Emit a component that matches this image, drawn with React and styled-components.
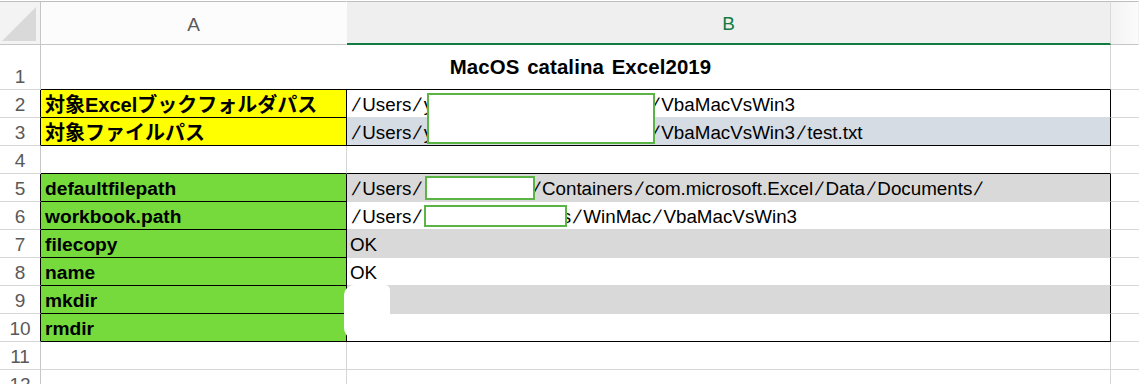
import React from 'react';
import styled, { createGlobalStyle } from 'styled-components';

const GRID = '#d6d6d6';
const HEAD_LINE = '#c6c6c6';
const EDGE = '#000';
const YELLOW = '#ffff00';
const GREEN = '#76d93c';
const BLUEGRAY = '#d6dce4';
const GRAY = '#d9d9d9';
const MARK = '#5bb446';

const GlobalStyle = createGlobalStyle`
    html, body {
        margin: 0;
        padding: 0;
        background: #fff;
    }
    body {
        font-family: "Liberation Sans", "Noto Sans CJK JP", sans-serif;
        overflow: hidden;
    }
`;

const Sheet = styled.div`
    position: relative;
    width: 1139px;
    height: 384px;
    padding-top: 1px;
    box-sizing: border-box;
    overflow: hidden;
    background: #fff;
`;

const Grid = styled.div`
    display: grid;
    grid-template-columns: 41px 306px 764px 1fr;
    grid-template-rows: 44px 45px repeat(11, 28px);
`;

const Corner = styled.div`
    box-sizing: border-box;
    border-top: 1px solid #bdbdbd;
    border-right: 1px solid ${HEAD_LINE};
    border-bottom: 1px solid ${HEAD_LINE};
    background: #f3f3f3;
    display: flex;

    svg {
        display: block;
    }
`;

const ColHead = styled.div`
    box-sizing: border-box;
    border-top: 1px solid #bdbdbd;
    border-bottom: ${props => props.$active ? '2px solid #107c41' : `1px solid ${HEAD_LINE}`};
    border-right: 1px solid ${props => props.$line || 'transparent'};
    background: ${props => props.$bg || '#fcfcfc'};
    color: ${props => props.$active ? '#107c41' : '#5a5a5a'};
    display: flex;
    align-items: center;
    justify-content: center;
    padding-top: 3px;
    font-size: 19px;
`;

const RowHead = styled.div`
    box-sizing: border-box;
    border-right: 1px solid ${props => props.$edge ? EDGE : HEAD_LINE};
    border-bottom: 1px solid ${GRID};
    display: flex;
    align-items: flex-end;
    justify-content: center;
    padding-bottom: 1px;
    color: #595959;
    font-size: 19px;
    line-height: 22px;
`;

const Cell = styled.div`
    box-sizing: border-box;
    display: flex;
    align-items: flex-end;
    padding: 0 0 1px ${props => props.$pad || 3}px;
    background: ${props => props.$fill || '#fff'};
    border-right: 1px solid ${props => props.$right || GRID};
    border-bottom: 1px solid ${props => props.$bottom || GRID};
    color: #000;
    font-size: ${props => props.$size || 18.8}px;
    font-weight: ${props => props.$bold ? 700 : 400};
    line-height: 22px;
    white-space: nowrap;
    overflow: hidden;
`;

const Title = styled.div`
    grid-column: span 2;
    box-sizing: border-box;
    display: flex;
    align-items: center;
    justify-content: center;
    padding-left: 10px;
    border-right: 1px solid ${GRID};
    border-bottom: 1px solid ${EDGE};
    font-size: 20.4px;
    font-weight: 700;
    letter-spacing: 0.1px;
    word-spacing: 2px;
`;

const Side = styled.div`
    box-sizing: border-box;
    border-bottom: 1px solid ${GRID};
    background: #fff;
`;

const Text = styled.span`
    white-space: pre;
`;

/* the sheet font draws a wide, flat solidus */
const Slash = styled.span`
    display: inline-block;
    width: 12.3px;
    text-align: center;
    transform: skewX(-16deg);
`;

const Hidden = styled.span`
    display: inline-block;
    width: ${props => props.$w}px;
`;

const Redact = styled.div`
    position: absolute;
    box-sizing: border-box;
    border: 2px solid ${MARK};
    background: #fff;
`;

const Smudge = styled.div`
    position: absolute;
    left: 344px;
    top: 285px;
    width: 46px;
    height: 56px;
    background: #fff;
    border-radius: 10px 5px 6px 14px;
`;

const PathText = ({ text }) => (
    text.split('/').map((part, i) => (
        <React.Fragment key={i}>
            {i > 0 && <Slash>/</Slash>}
            {part}
        </React.Fragment>
    ))
);

const rows = [
    {
        n: 2, edge: true,
        label: '対象Excelブックフォルダパス', labelFill: YELLOW, labelSize: 20,
        pre: '/Users/y', gap: 216, post: '/VbaMacVsWin3',
        fill: '#fff', bottom: BLUEGRAY,
    },
    {
        n: 3, edge: true,
        label: '対象ファイルパス', labelFill: YELLOW, labelSize: 20,
        pre: '/Users/y', gap: 216, post: '/VbaMacVsWin3/test.txt',
        fill: BLUEGRAY, bottom: EDGE,
    },
    { n: 4, blank: true },
    {
        n: 5, edge: true, label: 'defaultfilepath', labelFill: GREEN,
        pre: '/Users/', gap: 106, post: '/Containers/com.microsoft.Excel/Data/Documents/',
        fill: GRAY, bottom: GRAY,
    },
    {
        n: 6, edge: true, label: 'workbook.path', labelFill: GREEN,
        pre: '/Users/', gap: 138, post: 's/WinMac/VbaMacVsWin3',
        fill: '#fff', bottom: GRAY,
    },
    { n: 7, edge: true, label: 'filecopy', labelFill: GREEN, pre: 'OK', fill: GRAY, bottom: GRAY },
    { n: 8, edge: true, label: 'name', labelFill: GREEN, pre: 'OK', fill: '#fff', bottom: GRAY },
    { n: 9, edge: true, label: 'mkdir', labelFill: GREEN, pre: '', fill: GRAY, bottom: GRAY },
    { n: 10, edge: true, label: 'rmdir', labelFill: GREEN, pre: '', fill: '#fff', bottom: EDGE },
    { n: 11, blank: true, plain: true },
    { n: 12, blank: true, plain: true },
];

const CornerMark = () => (
    <svg width="40" height="43" viewBox="0 0 40 43">
        <polygon points="36,5 36,39 2,39" fill="#d9d9d9" />
    </svg>
);

const SheetRow = ({ row }) => {
    if (row.blank) {
        return (
            <>
                <RowHead>{row.n}</RowHead>
                <Cell $bottom={row.plain ? GRID : EDGE} />
                <Cell $bottom={row.plain ? GRID : EDGE} />
                <Side />
            </>
        );
    }
    return (
        <>
            <RowHead $edge={row.edge}>{row.n}</RowHead>
            <Cell
                $pad={4}
                $bold
                $size={row.labelSize || 19.2}
                $fill={row.labelFill}
                $right={EDGE}
                $bottom={EDGE}
            >
                <Text>{row.label}</Text>
            </Cell>
            <Cell $fill={row.fill} $right={EDGE} $bottom={row.bottom}>
                <Text>
                    <PathText text={row.pre} />
                    {row.gap && <Hidden $w={row.gap} />}
                    {row.post && <PathText text={row.post} />}
                </Text>
            </Cell>
            <Side />
        </>
    );
};

const App = () => {
    return (
        <Sheet>
            <GlobalStyle />
            <Grid>
                <Corner><CornerMark /></Corner>
                <ColHead>A</ColHead>
                <ColHead $active $bg="#efefef" $line="#dadada">B</ColHead>
                <ColHead $bg="linear-gradient(to right, #f3f3f3, #fbfbfb)" />

                <RowHead>1</RowHead>
                <Title>MacOS catalina Excel2019</Title>
                <Side />

                {rows.map(row => <SheetRow key={row.n} row={row} />)}
            </Grid>

            <Redact style={{ left: 427, top: 93, width: 228, height: 51 }} />
            <Redact style={{ left: 425, top: 176, width: 110, height: 24 }} />
            <Redact style={{ left: 424, top: 205, width: 143, height: 22 }} />
            <Smudge />
        </Sheet>
    );
};

export default App;
